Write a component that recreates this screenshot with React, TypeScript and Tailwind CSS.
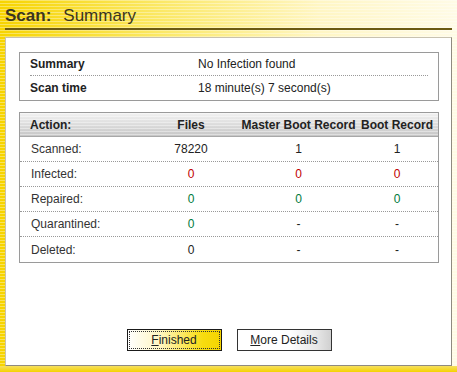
const ROWS: { label: string; files: string; mbr: string; br: string; tone?: "red" | "green"; mbrTone?: "red" | "green" }[] = [
  { label: "Scanned:", files: "78220", mbr: "1", br: "1" },
  { label: "Infected:", files: "0", mbr: "0", br: "0", tone: "red", mbrTone: "red" },
  { label: "Repaired:", files: "0", mbr: "0", br: "0", tone: "green", mbrTone: "green" },
  { label: "Quarantined:", files: "0", mbr: "-", br: "-", tone: "green" },
  { label: "Deleted:", files: "0", mbr: "-", br: "-" },
];

const TONE = { red: "text-[#c00000]", green: "text-[#007a3d]" };

function Cell({ value, tone }: { value: string; tone?: "red" | "green" }) {
  return <span className={tone ? TONE[tone] : "text-[#222]"}>{value}</span>;
}

export default function App() {
  return (
    <div
      className="w-[457px] h-[372px] flex flex-col overflow-hidden text-[12px] text-[#222]"
      style={{ fontFamily: '"Liberation Sans", Arial, sans-serif' }}
    >
      <div className="h-[366px] shrink-0 flex flex-col bg-[repeating-linear-gradient(180deg,rgba(255,255,255,0.35)_0px,rgba(255,255,255,0.35)_1px,transparent_1px,transparent_3px),linear-gradient(90deg,#f7d400_0%,#fbe866_35%,#fff6c4_70%,#fffbe6_100%)]">
        {/* title */}
        <div className="h-[28px] shrink-0 pl-[5px] flex items-end pb-[4px] gap-[12px] text-[17px] text-[#3b3520] leading-none">
          <span className="font-bold">Scan:</span>
          <span>Summary</span>
        </div>
        <div className="shrink-0 ml-[5px] mr-[5px] h-[2px] bg-[#6b5a12]" />

        {/* panel */}
        <div className="shrink-0 mt-[7px] ml-[5px] mr-[5px] h-[329px] bg-white border border-[#c8c2b0] border-r-[#8f8a80] border-b-[#8f8a80] pt-[14px] pl-[13px] pr-[12px] flex flex-col">
          <div className="border border-[#9a9a9a] px-[10px]">
            <div className="h-[23px] flex items-center border-b border-dotted border-[#999]">
              <span className="w-[168px] font-bold">Summary</span>
              <span>No Infection found</span>
            </div>
            <div className="h-[24px] flex items-center">
              <span className="w-[168px] font-bold">Scan time</span>
              <span>18 minute(s) 7 second(s)</span>
            </div>
          </div>

          <div className="mt-[11px] border border-[#9a9a9a]">
            <div className="h-[24px] flex items-center font-bold text-[#222] border-b border-[#a8a8a8] bg-[repeating-linear-gradient(180deg,rgba(255,255,255,0.4)_0px,rgba(255,255,255,0.4)_1px,transparent_1px,transparent_3px),linear-gradient(180deg,#f2f2f2_0%,#dcdcdc_50%,#c6c6c6_100%)]">
              <span className="w-[121px] pl-[10px]">Action:</span>
              <span className="w-[100px] text-center">Files</span>
              <span className="w-[115px] text-center">Master Boot Record</span>
              <span className="flex-1 text-center">Boot Record</span>
            </div>
            {ROWS.map((r, i) => (
              <div
                key={r.label}
                className={`h-[25px] flex items-center ${i < ROWS.length - 1 ? "border-b border-dotted border-[#999]" : ""}`}
              >
                <span className="w-[121px] pl-[11px] text-[#333]">{r.label}</span>
                <span className="w-[100px] text-center">
                  <Cell value={r.files} tone={r.tone} />
                </span>
                <span className="w-[115px] text-center">
                  <Cell value={r.mbr} tone={r.mbrTone} />
                </span>
                <span className="flex-1 text-center">
                  <Cell value={r.br} tone={r.mbrTone} />
                </span>
              </div>
            ))}
          </div>

          <div className="mt-auto mb-[14px] flex justify-center gap-[15px]">
            <button
              type="button"
              className="w-[95px] h-[22px] border border-[#1a1a1a] p-[1px] bg-[linear-gradient(90deg,#ffffff_0%,#fff6c0_35%,#f8dc10_80%,#f5d400_100%)]"
            >
              <span className="w-full h-full flex items-center justify-center border border-dotted border-[#333] text-[#222]">
                <span>
                  <span className="underline">F</span>inished
                </span>
              </span>
            </button>
            <button
              type="button"
              className="w-[95px] h-[22px] border border-[#333] flex items-center justify-center text-[#222] bg-[linear-gradient(90deg,#ffffff_0%,#ffffff_55%,#e6e6e6_85%,#d0d0d0_100%)]"
            >
              <span>
                <span className="underline">M</span>ore Details
              </span>
            </button>
          </div>
        </div>
      </div>
      <div className="h-[6px] shrink-0 bg-[linear-gradient(180deg,#f6e060_0%,#f5d200_100%)]" />
    </div>
  );
}
